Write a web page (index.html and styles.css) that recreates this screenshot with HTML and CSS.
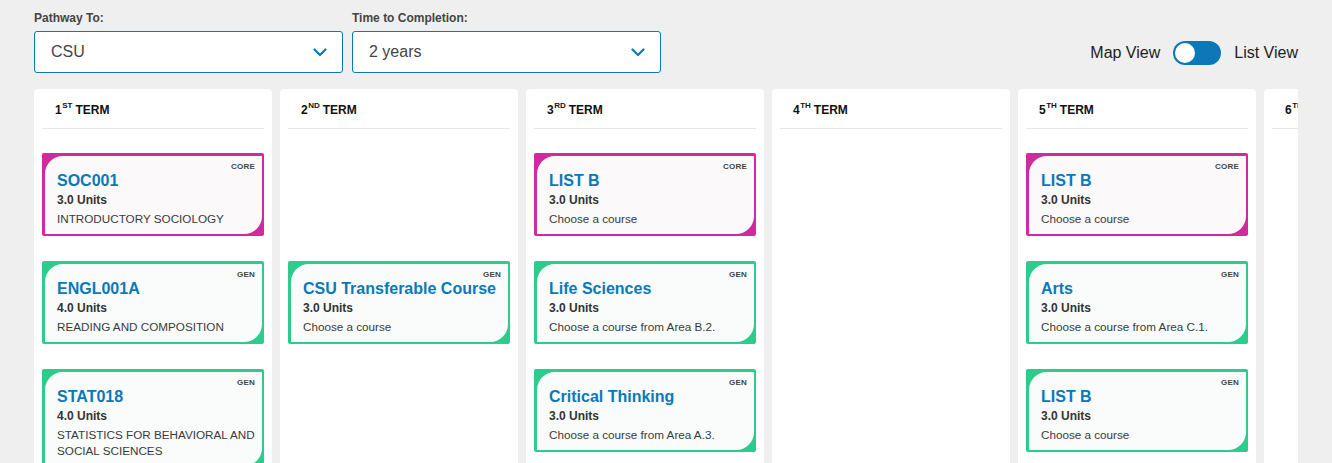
FILE: index.html
```html
<!DOCTYPE html>
<html>
<head>
<meta charset="utf-8">
<link rel="stylesheet" href="styles.css">
</head>
<body>
<div class="page">
  <div class="toolbar">
    <div class="field">
      <label class="field-label">Pathway To:</label>
      <div class="select"><span>CSU</span>
        <svg class="chev" width="14" height="9" viewBox="0 0 14 9"><path d="M1.5 1.5 L7 7 L12.5 1.5" fill="none" stroke="#0b78b8" stroke-width="2.2" stroke-linecap="round" stroke-linejoin="round"/></svg>
      </div>
    </div>
    <div class="field">
      <label class="field-label">Time to Completion:</label>
      <div class="select"><span>2 years</span>
        <svg class="chev" width="14" height="9" viewBox="0 0 14 9"><path d="M1.5 1.5 L7 7 L12.5 1.5" fill="none" stroke="#0b78b8" stroke-width="2.2" stroke-linecap="round" stroke-linejoin="round"/></svg>
      </div>
    </div>
    <div class="view-toggle">
      <span>Map View</span>
      <span class="switch"><span class="knob"></span></span>
      <span>List View</span>
    </div>
  </div>

  <div class="board">
    <div class="term">
      <div class="term-head">1<sup>ST</sup> TERM</div>
      <div class="cards">
        <div class="card core"><div class="card-in"><span class="tag">CORE</span><div class="title">SOC001</div><div class="units">3.0 Units</div><div class="desc">INTRODUCTORY SOCIOLOGY</div></div></div>
        <div class="card gen"><div class="card-in"><span class="tag">GEN</span><div class="title">ENGL001A</div><div class="units">4.0 Units</div><div class="desc">READING AND COMPOSITION</div></div></div>
        <div class="card gen"><div class="card-in"><span class="tag">GEN</span><div class="title">STAT018</div><div class="units">4.0 Units</div><div class="desc">STATISTICS FOR BEHAVIORAL AND SOCIAL SCIENCES</div></div></div>
      </div>
    </div>
    <div class="term">
      <div class="term-head">2<sup>ND</sup> TERM</div>
      <div class="cards">
        <div class="spacer"></div>
        <div class="card gen"><div class="card-in"><span class="tag">GEN</span><div class="title">CSU Transferable Course</div><div class="units">3.0 Units</div><div class="desc">Choose a course</div></div></div>
      </div>
    </div>
    <div class="term">
      <div class="term-head">3<sup>RD</sup> TERM</div>
      <div class="cards">
        <div class="card core"><div class="card-in"><span class="tag">CORE</span><div class="title">LIST B</div><div class="units">3.0 Units</div><div class="desc">Choose a course</div></div></div>
        <div class="card gen"><div class="card-in"><span class="tag">GEN</span><div class="title">Life Sciences</div><div class="units">3.0 Units</div><div class="desc">Choose a course from Area B.2.</div></div></div>
        <div class="card gen"><div class="card-in"><span class="tag">GEN</span><div class="title">Critical Thinking</div><div class="units">3.0 Units</div><div class="desc">Choose a course from Area A.3.</div></div></div>
      </div>
    </div>
    <div class="term">
      <div class="term-head">4<sup>TH</sup> TERM</div>
      <div class="cards"></div>
    </div>
    <div class="term">
      <div class="term-head">5<sup>TH</sup> TERM</div>
      <div class="cards">
        <div class="card core"><div class="card-in"><span class="tag">CORE</span><div class="title">LIST B</div><div class="units">3.0 Units</div><div class="desc">Choose a course</div></div></div>
        <div class="card gen"><div class="card-in"><span class="tag">GEN</span><div class="title">Arts</div><div class="units">3.0 Units</div><div class="desc">Choose a course from Area C.1.</div></div></div>
        <div class="card gen"><div class="card-in"><span class="tag">GEN</span><div class="title">LIST B</div><div class="units">3.0 Units</div><div class="desc">Choose a course</div></div></div>
      </div>
    </div>
    <div class="term">
      <div class="term-head">6<sup>TH</sup> TERM</div>
      <div class="cards"></div>
    </div>
  </div>
</div>
</body>
</html>
```

FILE: styles.css
```css
* { box-sizing: border-box; }
html, body { margin: 0; padding: 0; height: 100%; }
body {
  background: #efefef;
  font-family: "Liberation Sans", Arial, sans-serif;
  color: #333;
  overflow: hidden;
}
.page {
  padding: 0 34px;
  height: 463px;
  display: flex;
  flex-direction: column;
}
.toolbar {
  display: flex;
  align-items: flex-start;
  gap: 9px;
  padding-top: 11px;
}
.field { display: flex; flex-direction: column; width: 309px; }
.field-label {
  font-size: 12px;
  font-weight: bold;
  color: #444;
  line-height: 14px;
  margin-bottom: 6px;
}
.select {
  height: 42px;
  background: #fff;
  border: 1px solid #0b78b8;
  border-radius: 3px;
  display: flex;
  align-items: center;
  justify-content: space-between;
  padding: 0 15px 0 16px;
  font-size: 16px;
  color: #444;
}
.chev { margin-top: 1px; }
.view-toggle {
  margin-left: auto;
  display: flex;
  align-items: center;
  gap: 13px;
  font-size: 16px;
  color: #222;
  margin-top: 30px;
}
.switch {
  width: 48px;
  height: 24px;
  border-radius: 12px;
  background: #0b78b8;
  display: flex;
  align-items: center;
  padding-left: 2px;
}
.knob {
  width: 20px;
  height: 20px;
  border-radius: 50%;
  background: #fff;
}
.board {
  margin-top: 16px;
  display: flex;
  gap: 8px;
  overflow: hidden;
  flex: 1;
  min-height: 0;
}
.term {
  flex: 0 0 238px;
  background: #fff;
  border-radius: 4px 4px 0 0;
  padding: 0 8px;
}
.term-head {
  height: 40px;
  border-bottom: 1px solid #e8e8e8;
  padding-left: 13px;
  font-size: 12px;
  font-weight: bold;
  color: #111;
  display: flex;
  align-items: center;
  padding-top: 3px;
}
.term-head sup {
  font-size: 8px;
  line-height: 0;
  position: relative;
  top: -4px;
  margin-right: 3px;
  margin-left: 0.5px;
}
.cards {
  display: flex;
  flex-direction: column;
  gap: 25px;
  padding-top: 24px;
}
.spacer { height: 83px; }
.card {
  border-radius: 2px;
  padding: 3px 2px 2px 3px;
}
.card.core { background: #d02a9f; }
.card.gen { background: #2dcc8c; }
.card-in {
  position: relative;
  border-radius: 18px 0 18px 0;
  padding: 15px 3px 7px 12px;
  min-height: 78px;
}
.core .card-in { background: #fcf9fb; }
.gen .card-in { background: #f9fcfb; }
.tag {
  position: absolute;
  top: 6px;
  right: 7px;
  font-size: 8px;
  font-weight: bold;
  color: #444;
  letter-spacing: 0.2px;
}
.title {
  font-size: 16px;
  font-weight: bold;
  color: #0b78b8;
  line-height: 20px;
}
.units {
  font-size: 12px;
  font-weight: bold;
  color: #333;
  line-height: 18px;
}
.desc {
  font-size: 11.7px;
  color: #3a3a3a;
  line-height: 16px;
  margin-top: 2px;
}
```
